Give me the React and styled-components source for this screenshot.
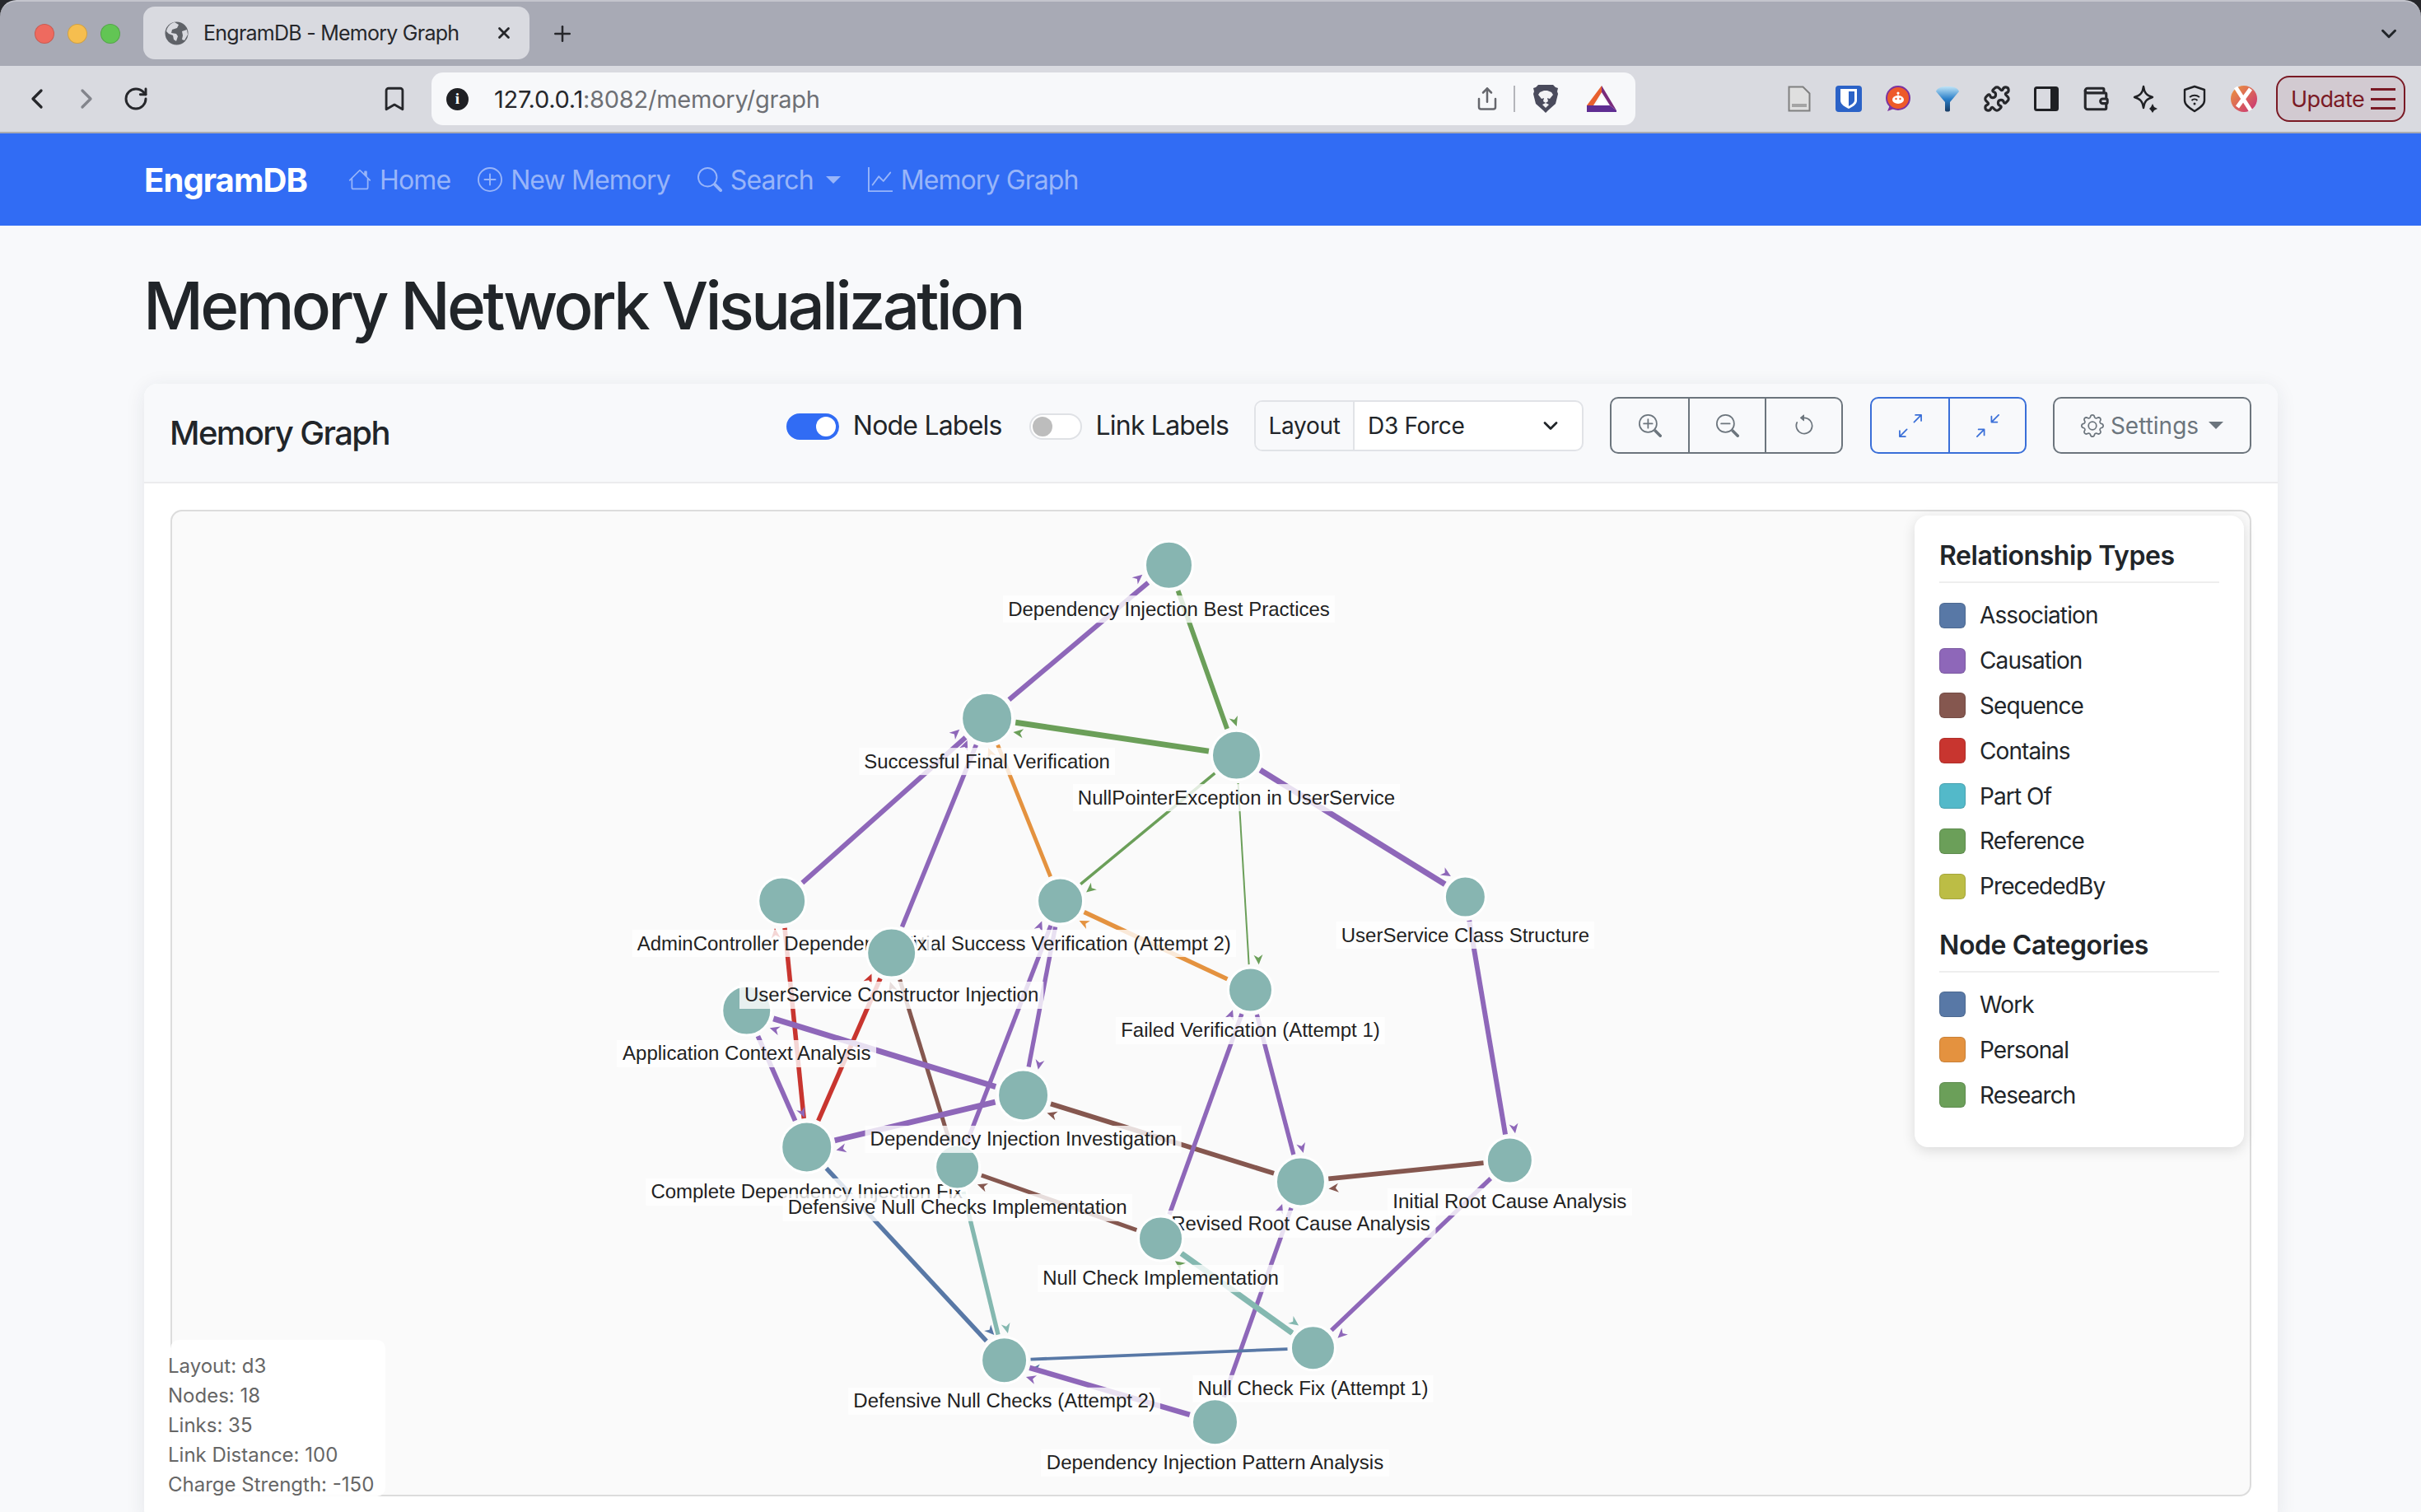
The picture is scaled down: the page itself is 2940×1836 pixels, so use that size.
import React from "react";
import styled, { createGlobalStyle } from "styled-components";
import {
  BsHouse,
  BsPlusCircle,
  BsSearch,
  BsGraphUp,
  BsZoomIn,
  BsZoomOut,
  BsArrowCounterclockwise,
  BsArrowsAngleExpand,
  BsArrowsAngleContract,
  BsGear,
} from "react-icons/bs";
import { LuChevronLeft, LuChevronRight, LuRotateCw, LuBookmark, LuShare, LuX, LuPlus, LuChevronDown, LuPuzzle, LuWallet } from "react-icons/lu";

const BLUE = "#316cf4";
const NODE = "#87b5b1";
const C = {
  assoc: "#5878a6",
  cause: "#8e67b9",
  seq: "#85574f",
  contains: "#c8352f",
  part: "#53b9c9",
  ref: "#6b9f59",
  prec: "#bcbd45",
  orange: "#e4923f",
  teal: "#84b8b0",
};

const GlobalStyle = createGlobalStyle`
  html, body { margin: 0; padding: 0; background: #f8f9fb; }
  body { font-family: Inter, "Noto Sans", sans-serif; color: #212529; overflow: hidden; }
  * { box-sizing: border-box; }
`;

const Window = styled.div`
  width: 2940px;
  height: 1836px;
  overflow: hidden;
  background: #f8f9fb;
`;

const Corners = styled.div`
  background: #26272b;
`;

const TitleBar = styled.div`
  height: 80px;
  background: #a8aab5;
  border-top: 2px solid #c4c5cd;
  border-radius: 20px 20px 0 0;
  display: flex;
  align-items: center;
  padding: 0 24px 0 42px;
`;

const Light = styled.span`
  width: 24px;
  height: 24px;
  border-radius: 50%;
  background: ${(p) => p.$color};
  border: 1px solid rgba(0, 0, 0, 0.15);
  margin-right: 16px;
  flex: none;
`;

const Tab = styled.div`
  margin-left: 12px;
  width: 469px;
  height: 64px;
  margin-top: -2px;
  background: #d9dae0;
  border-radius: 14px;
  display: flex;
  align-items: center;
  padding: 0 20px 0 26px;
  font-size: 25px;
  letter-spacing: -0.75px;
  color: #26272b;
`;

const TabTitle = styled.span`
  margin-left: 18px;
  flex: 1;
  white-space: nowrap;
`;

const NewTab = styled.span`
  margin-left: 25px;
  display: flex;
  color: #26272b;
`;

const Spacer = styled.div`
  flex: 1;
`;

const Toolbar = styled.div`
  height: 82px;
  background: #d9dae0;
  border-bottom: 2px solid #a9abb2;
  display: flex;
  align-items: center;
  color: #26272b;
`;

const IconSlot = styled.span`
  width: ${(p) => p.$w}px;
  margin-left: ${(p) => p.$ml || 0}px;
  display: flex;
  justify-content: center;
  align-items: center;
  flex: none;
  color: ${(p) => p.$color || "inherit"};
`;

const UrlBar = styled.div`
  margin-left: 15px;
  width: 1462px;
  height: 64px;
  background: #f7f8fa;
  border-radius: 14px;
  display: flex;
  align-items: center;
  padding-left: 18px;
  flex: none;
`;

const InfoDot = styled.span`
  width: 27px;
  height: 27px;
  border-radius: 50%;
  background: #1f2024;
  color: #fff;
  font: 700 19px "Liberation Serif", serif;
  display: flex;
  align-items: center;
  justify-content: center;
  flex: none;
`;

const UrlText = styled.span`
  margin-left: 31px;
  font-size: 29px;
  letter-spacing: -0.25px;
  color: #26272b;
  white-space: nowrap;
  flex: 1;
  span { color: #6e7075; }
`;

const UrlDivider = styled.span`
  width: 2px;
  height: 32px;
  background: #b4b5ba;
  margin: 0 21px 0 14px;
  flex: none;
`;

const UpdateButton = styled.div`
  margin-left: 9px;
  width: 157px;
  height: 56px;
  border: 2px solid #7a1a25;
  border-radius: 16px;
  background: rgba(122, 26, 37, 0.08);
  color: #7a1a25;
  font-size: 27px;
  letter-spacing: -0.6px;
  display: flex;
  align-items: center;
  justify-content: space-between;
  padding: 0 10px 0 16px;
  flex: none;
`;

const Burger = styled.span`
  width: 30px;
  height: 26px;
  border-top: 3px solid #7a1a25;
  border-bottom: 3px solid #7a1a25;
  display: flex;
  align-items: center;
  &::before {
    content: "";
    width: 100%;
    height: 3px;
    background: #7a1a25;
  }
`;

const NavBar = styled.nav`
  height: 112px;
  background: ${BLUE};
  display: flex;
  align-items: center;
  padding-left: 175px;
`;

const Brand = styled.span`
  font-size: 40px;
  font-weight: 700;
  letter-spacing: -0.9px;
  color: #fff;
  margin-right: 50px;
`;

const NavLink = styled.span`
  display: flex;
  align-items: center;
  gap: 10px;
  font-size: 32px;
  letter-spacing: -0.9px;
  color: #98b5f9;
  margin-right: 33px;
  white-space: nowrap;
`;

const Caret = styled.span`
  width: 0;
  height: 0;
  border-left: 9px solid transparent;
  border-right: 9px solid transparent;
  border-top: 9px solid ${(p) => p.$color || "#98b5f9"};
  margin-left: ${(p) => p.$ml || 0}px;
`;

const Main = styled.main`
  padding: 49px 174px 0 175px;
`;

const Heading = styled.h1`
  margin: 0 0 47px -1px;
  font-size: 80px;
  line-height: 96px;
  font-weight: 500;
  letter-spacing: -3.8px;
  color: #212529;
`;

const Card = styled.section`
  background: #fff;
  border-radius: 16px;
  box-shadow: 0 4px 24px rgba(30, 40, 70, 0.09);
`;

const CardHeader = styled.header`
  height: 121px;
  background: #f8f9fb;
  border-bottom: 2px solid #ececee;
  border-radius: 16px 16px 0 0;
  padding: 16px 32px 16px 31px;
  display: flex;
  justify-content: space-between;
`;

const CardTitle = styled.h5`
  margin: 0;
  font-size: 40px;
  font-weight: 500;
  letter-spacing: -1.6px;
  align-self: center;
  color: #212529;
`;

const Controls = styled.div`
  display: flex;
  align-items: center;
  height: 69px;
`;

const Toggle = styled.span`
  width: 64px;
  height: 32px;
  border-radius: 16px;
  background: ${(p) => (p.$on ? BLUE : "#fff")};
  border: 2px solid ${(p) => (p.$on ? BLUE : "#dfe1e5")};
  display: flex;
  align-items: center;
  justify-content: ${(p) => (p.$on ? "flex-end" : "flex-start")};
  padding: 0 2px;
  margin-top: 2px;
  &::after {
    content: "";
    width: 24px;
    height: 24px;
    border-radius: 50%;
    background: ${(p) => (p.$on ? "#fff" : "#bdbdbd")};
  }
`;

const ToggleLabel = styled.span`
  font-size: 32px;
  letter-spacing: -0.8px;
  margin: 0 ${(p) => p.$mr}px 0 17px;
  white-space: nowrap;
  color: #212529;
`;

const InputGroup = styled.div`
  width: 400px;
  height: 62px;
  border: 2px solid #e1e3e7;
  border-radius: 10px;
  display: flex;
  align-items: center;
  background: #fff;
  font-size: 28px;
  letter-spacing: -0.3px;
  margin-right: 32px;
  overflow: hidden;
`;

const GroupLabel = styled.span`
  width: 120px;
  height: 100%;
  background: #f8f9fb;
  border-right: 2px solid #e1e3e7;
  display: flex;
  align-items: center;
  justify-content: center;
  flex: none;
`;

const GroupValue = styled.span`
  flex: 1;
  padding: 0 24px 0 16px;
  display: flex;
  align-items: center;
  justify-content: space-between;
`;

const BtnGroup = styled.div`
  display: flex;
  height: 69px;
  border: 2px solid ${(p) => p.$color};
  border-radius: 10px;
  color: ${(p) => p.$color};
  margin-right: ${(p) => p.$mr}px;
`;

const GroupBtn = styled.span`
  width: 93px;
  display: flex;
  align-items: center;
  justify-content: center;
  & + & { border-left: 2px solid currentColor; }
`;

const SettingsBtn = styled.span`
  width: 241px;
  height: 69px;
  border: 2px solid #6c757d;
  border-radius: 10px;
  color: #6c757d;
  display: flex;
  align-items: center;
  justify-content: center;
  gap: 8px;
  font-size: 28px;
`;

const CardBody = styled.div`
  padding: 32px;
`;

const GraphBox = styled.div`
  position: relative;
  height: 1198px;
  border: 2px solid #dcdcdc;
  border-radius: 14px;
  background: #fafafa;
`;

const GraphSvg = styled.svg`
  position: absolute;
  left: 0;
  top: 0;
  width: 100%;
  height: 100%;
`;

const LabelText = styled.text`
  font-family: "Liberation Sans", Arial, sans-serif;
  font-size: 24px;
  fill: #222;
  text-anchor: middle;
  dominant-baseline: central;
`;

const Legend = styled.aside`
  position: absolute;
  left: 2116px;
  top: 5px;
  width: 400px;
  height: 767px;
  background: #fff;
  border-radius: 16px;
  box-shadow: 0 4px 16px rgba(0, 0, 0, 0.13);
  padding: 30px 30px 0;
`;

const LegendTitle = styled.h6`
  margin: 0 0 12px;
  padding-bottom: 12px;
  border-bottom: 2px solid #eeeeee;
  font-size: 32px;
  line-height: 38px;
  font-weight: 600;
  letter-spacing: -0.4px;
  color: #212529;
`;

const LegendList = styled.div`
  display: flex;
  flex-direction: column;
  margin-bottom: 25px;
`;

const LegendRow = styled.div`
  display: flex;
  align-items: center;
  height: 54.8px;
  font-size: 28px;
  letter-spacing: -0.9px;
  color: #212529;
  gap: 17px;
`;

const Swatch = styled.span`
  width: 32px;
  height: 31px;
  border-radius: 6px;
  background: ${(p) => p.$color};
  border: 1px solid rgba(0, 0, 0, 0.12);
  flex: none;
`;

const InfoBox = styled.div`
  position: absolute;
  left: -2px;
  bottom: -2px;
  width: 261px;
  height: 190px;
  background: rgba(255, 255, 255, 0.92);
  border-radius: 10px;
  font-size: 24px;
  line-height: 36px;
  color: #666;
  padding-top: 14px;
  text-indent: -3px;
  white-space: nowrap;
`;

// paint order matters here: later nodes cover the labels of earlier ones
const NODES = [
  { id: 1, x: 1419, y: 686, r: 29, ly: 739, t: "Dependency Injection Best Practices" },
  { id: 2, x: 1198, y: 872, r: 31, ly: 924, t: "Successful Final Verification" },
  { id: 3, x: 1501, y: 917, r: 30, ly: 968, t: "NullPointerException in UserService" },
  { id: 5, x: 1287, y: 1094, r: 28, ly: 1145, t: "Partial Success Verification (Attempt 2)" },
  { id: 4, x: 949, y: 1094, r: 29, ly: 1145, t: "AdminController Dependency Fix" },
  { id: 7, x: 1779, y: 1089, r: 25, ly: 1135, t: "UserService Class Structure" },
  { id: 8, x: 1518, y: 1202, r: 27, ly: 1251, t: "Failed Verification (Attempt 1)" },
  { id: 9, x: 906, y: 1227, r: 30, ly: 1279, t: "Application Context Analysis" },
  { id: 6, x: 1082, y: 1157, r: 30, ly: 1208, t: "UserService Constructor Injection" },
  { id: 11, x: 979, y: 1393, r: 31, ly: 1447, t: "Complete Dependency Injection Fix" },
  { id: 12, x: 1162, y: 1417, r: 27, ly: 1466, t: "Defensive Null Checks Implementation" },
  { id: 10, x: 1242, y: 1330, r: 31, ly: 1383, t: "Dependency Injection Investigation" },
  { id: 14, x: 1579, y: 1435, r: 30, ly: 1486, t: "Revised Root Cause Analysis" },
  { id: 15, x: 1833, y: 1409, r: 28, ly: 1459, t: "Initial Root Cause Analysis" },
  { id: 13, x: 1409, y: 1504, r: 27, ly: 1552, t: "Null Check Implementation" },
  { id: 16, x: 1594, y: 1637, r: 27, ly: 1686, t: "Null Check Fix (Attempt 1)" },
  { id: 17, x: 1219, y: 1652, r: 28, ly: 1701, t: "Defensive Null Checks (Attempt 2)" },
  { id: 18, x: 1475, y: 1727, r: 28, ly: 1776, t: "Dependency Injection Pattern Analysis" },
];

// source, target, colour, width
const LINKS = [
  [2, 1, C.cause, 6],
  [1, 3, C.ref, 5.8],
  [3, 2, C.ref, 7],
  [4, 2, C.cause, 6],
  [6, 2, C.cause, 5.5],
  [5, 2, C.orange, 4.8],
  [3, 5, C.ref, 3.5],
  [3, 8, C.ref, 2],
  [3, 7, C.cause, 7],
  [8, 5, C.orange, 5.5],
  [7, 15, C.cause, 6],
  [11, 4, C.contains, 5.5],
  [11, 6, C.contains, 5.5],
  [12, 6, C.seq, 5],
  [9, 11, C.cause, 5.8],
  [10, 9, C.cause, 7],
  [10, 11, C.cause, 7],
  [5, 10, C.cause, 5.3],
  [12, 5, C.cause, 5.3],
  [14, 10, C.seq, 5.8],
  [15, 14, C.seq, 5.8],
  [13, 12, C.seq, 5],
  [13, 8, C.cause, 5.3],
  [8, 14, C.cause, 5.3],
  [18, 14, C.cause, 5.3],
  [15, 16, C.cause, 5.3],
  [16, 13, C.ref, 3],
  [13, 16, C.teal, 7],
  [12, 17, C.teal, 5.3],
  [11, 17, C.assoc, 5.3],
  [16, 17, C.assoc, 3.8],
  [18, 17, C.cause, 6.5],
];

const RELATIONS = [
  ["Association", C.assoc],
  ["Causation", C.cause],
  ["Sequence", C.seq],
  ["Contains", C.contains],
  ["Part Of", C.part],
  ["Reference", C.ref],
  ["PrecededBy", C.prec],
];

const CATEGORIES = [
  ["Work", C.assoc],
  ["Personal", C.orange],
  ["Research", C.ref],
];

const byId = Object.fromEntries(NODES.map((n) => [n.id, n]));

const measure = (() => {
  const ctx = document.createElement("canvas").getContext("2d");
  ctx.font = '24px "Liberation Sans"';
  return (text) => ctx.measureText(text).width;
})();

const Link = ({ from, to, color, width }) => {
  const a = byId[from];
  const b = byId[to];
  const len = Math.hypot(b.x - a.x, b.y - a.y);
  const dx = (b.x - a.x) / len;
  const dy = (b.y - a.y) / len;
  // the arrow sits beside the line, just before the target
  const tipX = b.x - dx * (b.r + 3) + dy * 12;
  const tipY = b.y - dy * (b.r + 3) - dx * 12;
  const angle = (Math.atan2(dy, dx) * 180) / Math.PI;
  return (
    <g>
      <line
        x1={a.x + dx * (a.r + 4)}
        y1={a.y + dy * (a.r + 4)}
        x2={b.x - dx * (b.r + 4)}
        y2={b.y - dy * (b.r + 4)}
        stroke={color}
        strokeWidth={width}
      />
      <path d="M0 0L-12 -5.5L-8.5 0L-12 5.5Z" fill={color} transform={`translate(${tipX} ${tipY}) rotate(${angle})`} />
    </g>
  );
};

const Node = ({ node }) => {
  const w = measure(node.t) + 12;
  return (
    <g>
      <circle cx={node.x} cy={node.y} r={node.r} fill={NODE} stroke="#fff" strokeWidth="3" />
      <rect x={node.x - w / 2} y={node.ly - 16} width={w} height={33} fill="#fff" fillOpacity="0.8" />
      <LabelText x={node.x} y={node.ly}>{node.t}</LabelText>
    </g>
  );
};

const Graph = () => (
  <GraphSvg viewBox="208 621 2524 1194">
    {LINKS.map(([from, to, color, width], i) => (
      <Link key={i} from={from} to={to} color={color} width={width} />
    ))}
    {NODES.map((n) => (
      <Node key={n.id} node={n} />
    ))}
  </GraphSvg>
);

const GlobeIcon = () => (
  <svg width="29" height="29" viewBox="0 0 29 29">
    <circle cx="14.5" cy="14.5" r="14" fill="#5f6268" />
    <path d="M12 1l5 3-2 4-6 2-1 4 6 1 2 3-2 6-3-2-1-5-5-2-3-3C3 7 7 2 12 1z" fill="#d9dae0" />
    <path d="M21 12l6-2 1 6-4 7-3-1 1-5z" fill="#d9dae0" />
  </svg>
);

const BraveIcon = () => (
  <svg width="32" height="36" viewBox="0 0 32 36">
    <path d="M7 1h18l3 3 3 1-1 4 1 3-3 12-9 8-3 3-3-3-9-8L1 12l1-3-1-4 3-1z" fill="#4a4b5c" />
    <path d="M9 10l5-2h4l5 2 2 3-4 5-3-1 1 4-3 2-3-2 1-4-3 1-4-5z" fill="#f2f2f4" />
    <path d="M12 25l4-2 4 2-4 4z" fill="#f2f2f4" />
  </svg>
);

const BatIcon = () => (
  <svg width="36" height="32" viewBox="0 0 36 32">
    <path d="M18 0L0 24h8L18 8z" fill="#e8602f" />
    <path d="M18 0l18 30-8-6L18 8z" fill="#7a2b7c" />
    <path d="M0 24l8 0h20l8 6-0 2H0z" fill="#5f2d92" />
    <path d="M18 12l7 12H11z" fill="#fff" />
  </svg>
);

const DocIcon = () => (
  <svg width="28" height="32" viewBox="0 0 28 32">
    <path d="M1.5 1.5h17l8 8v21h-25z" fill="#dfdfdf" stroke="#808080" strokeWidth="2" />
    <rect x="5" y="22" width="18" height="4" fill="#a4a4a4" />
  </svg>
);

const BitwardenIcon = () => (
  <svg width="32" height="32" viewBox="0 0 32 32">
    <rect width="32" height="32" rx="4" fill="#2b62c7" />
    <path d="M6 4h20v14c0 5-6 8-10 10-4-2-10-5-10-10z" fill="#fff" />
    <path d="M16 7h7v11c0 3-4 5-7 7z" fill="#2b62c7" />
  </svg>
);

const RedditIcon = () => (
  <svg width="30" height="32" viewBox="0 0 30 32">
    <circle cx="15" cy="15" r="14" fill="#ee5a2a" stroke="#7b33a0" strokeWidth="2" />
    <path d="M5 24l-3 7 8-3z" fill="#7b33a0" />
    <ellipse cx="15" cy="17" rx="7" ry="5" fill="#fff" />
    <circle cx="15" cy="9" r="1.6" fill="#fff" />
    <path d="M15 9v4" stroke="#fff" />
    <circle cx="12.5" cy="16" r="1.2" fill="#ee5a2a" />
    <circle cx="17.5" cy="16" r="1.2" fill="#ee5a2a" />
  </svg>
);

const FunnelIcon = () => (
  <svg width="30" height="32" viewBox="0 0 30 32">
    <defs>
      <linearGradient id="funnel" x1="0" x2="0" y1="0" y2="1">
        <stop offset="0" stopColor="#bfe4f7" />
        <stop offset="0.5" stopColor="#2a7fc9" />
        <stop offset="1" stopColor="#173a63" />
      </linearGradient>
    </defs>
    <path d="M1 7C3 2 8 1 15 1s12 1 14 6L18 20v10c0 2-6 2-6 0V20z" fill="url(#funnel)" />
  </svg>
);

const SidebarIcon = () => (
  <svg width="30" height="30" viewBox="0 0 30 30">
    <rect x="1.5" y="1.5" width="27" height="27" rx="2" fill="none" stroke="#1f2024" strokeWidth="3" />
    <rect x="20" y="2" width="8" height="26" fill="#1f2024" />
  </svg>
);

const SparkleIcon = () => (
  <svg width="32" height="34" viewBox="0 0 32 34" fill="none" stroke="#1f2024" strokeWidth="2.4">
    <path d="M14 2c1 8 4 11 11 13-7 2-10 5-11 13-1-8-4-11-11-13 7-2 10-5 11-13z" strokeLinejoin="round" />
    <path d="M25 23l2 4 4 2-4 2-2 3-2-3-2-2 2-2z" fill="#1f2024" stroke="none" />
  </svg>
);

const VpnIcon = () => (
  <svg width="28" height="34" viewBox="0 0 28 34" fill="none" stroke="#1f2024" strokeWidth="2.4">
    <path d="M14 2l12 4v13c0 6-7 10-12 13C9 29 2 25 2 19V6z" strokeLinejoin="round" />
    <path d="M8 15c4-3 8-3 12 0M10.5 19c2-2 5-2 7 0" strokeWidth="2" />
    <circle cx="14" cy="23" r="1.5" fill="#1f2024" stroke="none" />
  </svg>
);

const CrossCircleIcon = () => (
  <svg width="32" height="32" viewBox="0 0 32 32">
    <defs>
      <linearGradient id="xc" x1="0" x2="1" y1="0" y2="1">
        <stop offset="0" stopColor="#ee9a3c" />
        <stop offset="1" stopColor="#c72f79" />
      </linearGradient>
    </defs>
    <circle cx="16" cy="16" r="16" fill="url(#xc)" />
    <path d="M6 2L24 30M24 4L8 26" stroke="#fff" strokeWidth="5" />
  </svg>
);

const App = () => (
  <>
    <GlobalStyle />
    <Window>
      <Corners>
        <TitleBar>
          <Light $color="#ee6a5f" />
          <Light $color="#f6be4f" />
          <Light $color="#62c554" />
          <Tab>
            <GlobeIcon />
            <TabTitle>EngramDB - Memory Graph</TabTitle>
            <LuX size={22} strokeWidth={3} />
          </Tab>
          <NewTab>
            <LuPlus size={30} strokeWidth={2} />
          </NewTab>
          <Spacer />
          <LuChevronDown size={30} strokeWidth={2.4} />
        </TitleBar>
      </Corners>
      <Toolbar>
        <IconSlot $w={60} $ml={15}><LuChevronLeft size={40} strokeWidth={2} /></IconSlot>
        <IconSlot $w={60} $color="#83858c"><LuChevronRight size={40} strokeWidth={2} /></IconSlot>
        <IconSlot $w={60}><LuRotateCw size={32} strokeWidth={2.2} /></IconSlot>
        <IconSlot $w={60} $ml={254}><LuBookmark size={34} strokeWidth={2} /></IconSlot>
        <UrlBar>
          <InfoDot>i</InfoDot>
          <UrlText>127.0.0.1<span>:8082/memory/graph</span></UrlText>
          <IconSlot $w={36} $color="#66676d"><LuShare size={30} strokeWidth={2} /></IconSlot>
          <UrlDivider />
          <IconSlot $w={32}><BraveIcon /></IconSlot>
          <IconSlot $w={36} $ml={34}><BatIcon /></IconSlot>
          <IconSlot $w={23} />
        </UrlBar>
        <IconSlot $w={60} $ml={169}><DocIcon /></IconSlot>
        <IconSlot $w={60}><BitwardenIcon /></IconSlot>
        <IconSlot $w={60}><RedditIcon /></IconSlot>
        <IconSlot $w={60}><FunnelIcon /></IconSlot>
        <IconSlot $w={60}><LuPuzzle size={34} strokeWidth={2.2} /></IconSlot>
        <IconSlot $w={60}><SidebarIcon /></IconSlot>
        <IconSlot $w={60}><LuWallet size={34} strokeWidth={2.2} /></IconSlot>
        <IconSlot $w={60}><SparkleIcon /></IconSlot>
        <IconSlot $w={60}><VpnIcon /></IconSlot>
        <IconSlot $w={60}><CrossCircleIcon /></IconSlot>
        <UpdateButton>Update<Burger /></UpdateButton>
      </Toolbar>
      <NavBar>
        <Brand>EngramDB</Brand>
        <NavLink><BsHouse size={28} />Home</NavLink>
        <NavLink><BsPlusCircle size={30} />New Memory</NavLink>
        <NavLink><BsSearch size={30} />Search<Caret $ml={5} /></NavLink>
        <NavLink><BsGraphUp size={30} />Memory Graph</NavLink>
      </NavBar>
      <Main>
        <Heading>Memory Network Visualization</Heading>
        <Card>
          <CardHeader>
            <CardTitle>Memory Graph</CardTitle>
            <Controls>
              <Toggle $on />
              <ToggleLabel $mr={33}>Node Labels</ToggleLabel>
              <Toggle />
              <ToggleLabel $mr={31}>Link Labels</ToggleLabel>
              <InputGroup>
                <GroupLabel>Layout</GroupLabel>
                <GroupValue>D3 Force<LuChevronDown size={28} strokeWidth={2.4} /></GroupValue>
              </InputGroup>
              <BtnGroup $color="#6c757d" $mr={33}>
                <GroupBtn><BsZoomIn size={28} /></GroupBtn>
                <GroupBtn><BsZoomOut size={28} /></GroupBtn>
                <GroupBtn><BsArrowCounterclockwise size={28} /></GroupBtn>
              </BtnGroup>
              <BtnGroup $color="#3a6fd8" $mr={32}>
                <GroupBtn><BsArrowsAngleExpand size={28} /></GroupBtn>
                <GroupBtn><BsArrowsAngleContract size={28} /></GroupBtn>
              </BtnGroup>
              <SettingsBtn><BsGear size={28} />Settings<Caret $color="#6c757d" $ml={4} /></SettingsBtn>
            </Controls>
          </CardHeader>
          <CardBody>
            <GraphBox>
              <Graph />
              <Legend>
                <LegendTitle>Relationship Types</LegendTitle>
                <LegendList>
                  {RELATIONS.map(([name, color]) => (
                    <LegendRow key={name}><Swatch $color={color} />{name}</LegendRow>
                  ))}
                </LegendList>
                <LegendTitle>Node Categories</LegendTitle>
                <LegendList>
                  {CATEGORIES.map(([name, color]) => (
                    <LegendRow key={name}><Swatch $color={color} />{name}</LegendRow>
                  ))}
                </LegendList>
              </Legend>
              <InfoBox>
                <div>Layout: d3</div>
                <div>Nodes: 18</div>
                <div>Links: 35</div>
                <div>Link Distance: 100</div>
                <div>Charge Strength: -150</div>
              </InfoBox>
            </GraphBox>
          </CardBody>
        </Card>
      </Main>
    </Window>
  </>
);

export default App;
